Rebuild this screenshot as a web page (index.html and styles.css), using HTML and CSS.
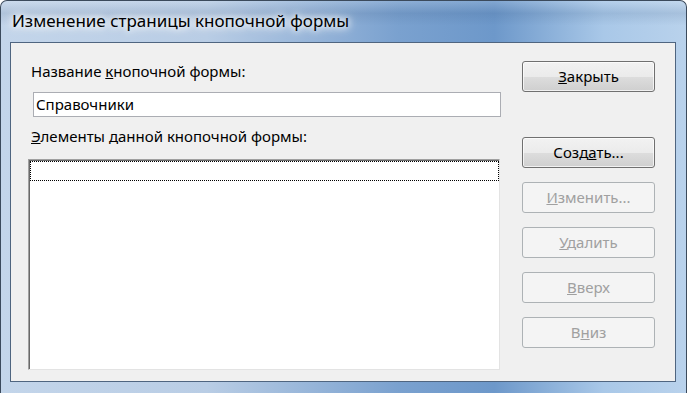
FILE: index.html
```html
<!DOCTYPE html>
<html lang="ru">
<head>
    <meta charset="UTF-8">
    <title>Изменение страницы кнопочной формы</title>
    <link rel="stylesheet" href="styles.css">
</head>
<body>
    <div class="window">
        <div class="titlebar">Изменение страницы кнопочной формы</div>
        <div class="client">
            <div class="left">
                <div class="label first">Название <u>к</u>нопочной формы:</div>
                <div class="textbox">Справочники</div>
                <div class="label second"><u>Э</u>лементы данной кнопочной формы:</div>
                <div class="listbox">
                    <div class="item"></div>
                </div>
            </div>
            <div class="buttons">
                <div class="btn"><u>З</u>акрыть</div>
                <div class="btn create">Созд<u>а</u>ть...</div>
                <div class="btn disabled"><u>И</u>зменить...</div>
                <div class="btn disabled"><u>У</u>далить</div>
                <div class="btn disabled"><u>В</u>верх</div>
                <div class="btn disabled">В<u>н</u>из</div>
            </div>
        </div>
    </div>
</body>
</html>
```

FILE: styles.css
```css
body {
    margin: 0;
    background: #ffffff;
    font-family: "Noto Sans", "Open Sans", sans-serif;
    font-size: 15px;
    color: #000;
}
.window {
    width: 687px;
    height: 393px;
    box-sizing: border-box;
    border: 1px solid #3b4a5c;
    border-bottom: none;
    border-radius: 7px 7px 0 0;
    background: linear-gradient(90deg, #c3d5ea 0%, #b9cde5 30%, #7aa1cf 58%, #6d98ca 72%, #a9c8e8 88%, #b9d2ec 100%);
    overflow: hidden;
}
.titlebar {
    height: 41px;
    box-sizing: border-box;
    padding: 8px 0 0 11px;
    font-size: 17px;
    line-height: 24px;
    color: #000;
    text-shadow: 0 0 6px #fff, 0 0 10px #fff, 0 0 14px rgba(255,255,255,0.8);
    background: linear-gradient(180deg, rgba(255,255,255,0.15) 0%, rgba(40,70,110,0.12) 30%, rgba(255,255,255,0) 60%);
}
.client {
    margin: 0 10px 0 9px;
    height: 340px;
    box-sizing: border-box;
    border: 1px solid #4f6580;
    background: #f0f0f0;
    display: flex;
}
.left {
    margin-left: 17px;
    width: 472px;
}
.label {
    margin-left: 3px;
    line-height: 20px;
    white-space: nowrap;
}
.label.first {
    margin-top: 18px;
}
.label.second {
    margin-top: 9px;
}
.textbox {
    margin: 11px 0 0 5px;
    width: 468px;
    height: 25px;
    box-sizing: border-box;
    border: 1px solid #abadb3;
    background: #fff;
    padding-left: 2px;
    line-height: 22px;
}
.listbox {
    margin-top: 13px;
    height: 211px;
    box-sizing: border-box;
    border-top: 1px solid #a0a0a0;
    border-left: 1px solid #a0a0a0;
    border-right: 1px solid #e3e3e3;
    border-bottom: 1px solid #e3e3e3;
    box-shadow: inset 1px 1px 0 #696969;
    background: #fff;
    padding: 1px 0 0 1px;
}
.item {
    height: 20px;
    box-sizing: border-box;
    border: 1px dotted #000;
    margin-right: 0;
}
.buttons {
    margin-left: 22px;
    margin-top: 18px;
    display: flex;
    flex-direction: column;
    gap: 14px;
}
.btn {
    width: 133px;
    height: 31px;
    box-sizing: border-box;
    border: 1px solid #707070;
    border-radius: 3px;
    background: linear-gradient(180deg, #f2f2f2 0%, #ebebeb 50%, #dddddd 51%, #cfcfcf 100%);
    box-shadow: inset 0 0 0 1px rgba(255,255,255,0.7);
    text-align: center;
    line-height: 28px;
}
.btn.create {
    margin-top: 31px;
}
.btn.disabled {
    border-color: #adb2b5;
    background: #f4f4f4;
    box-shadow: none;
    color: #a0a0a0;
}
```
